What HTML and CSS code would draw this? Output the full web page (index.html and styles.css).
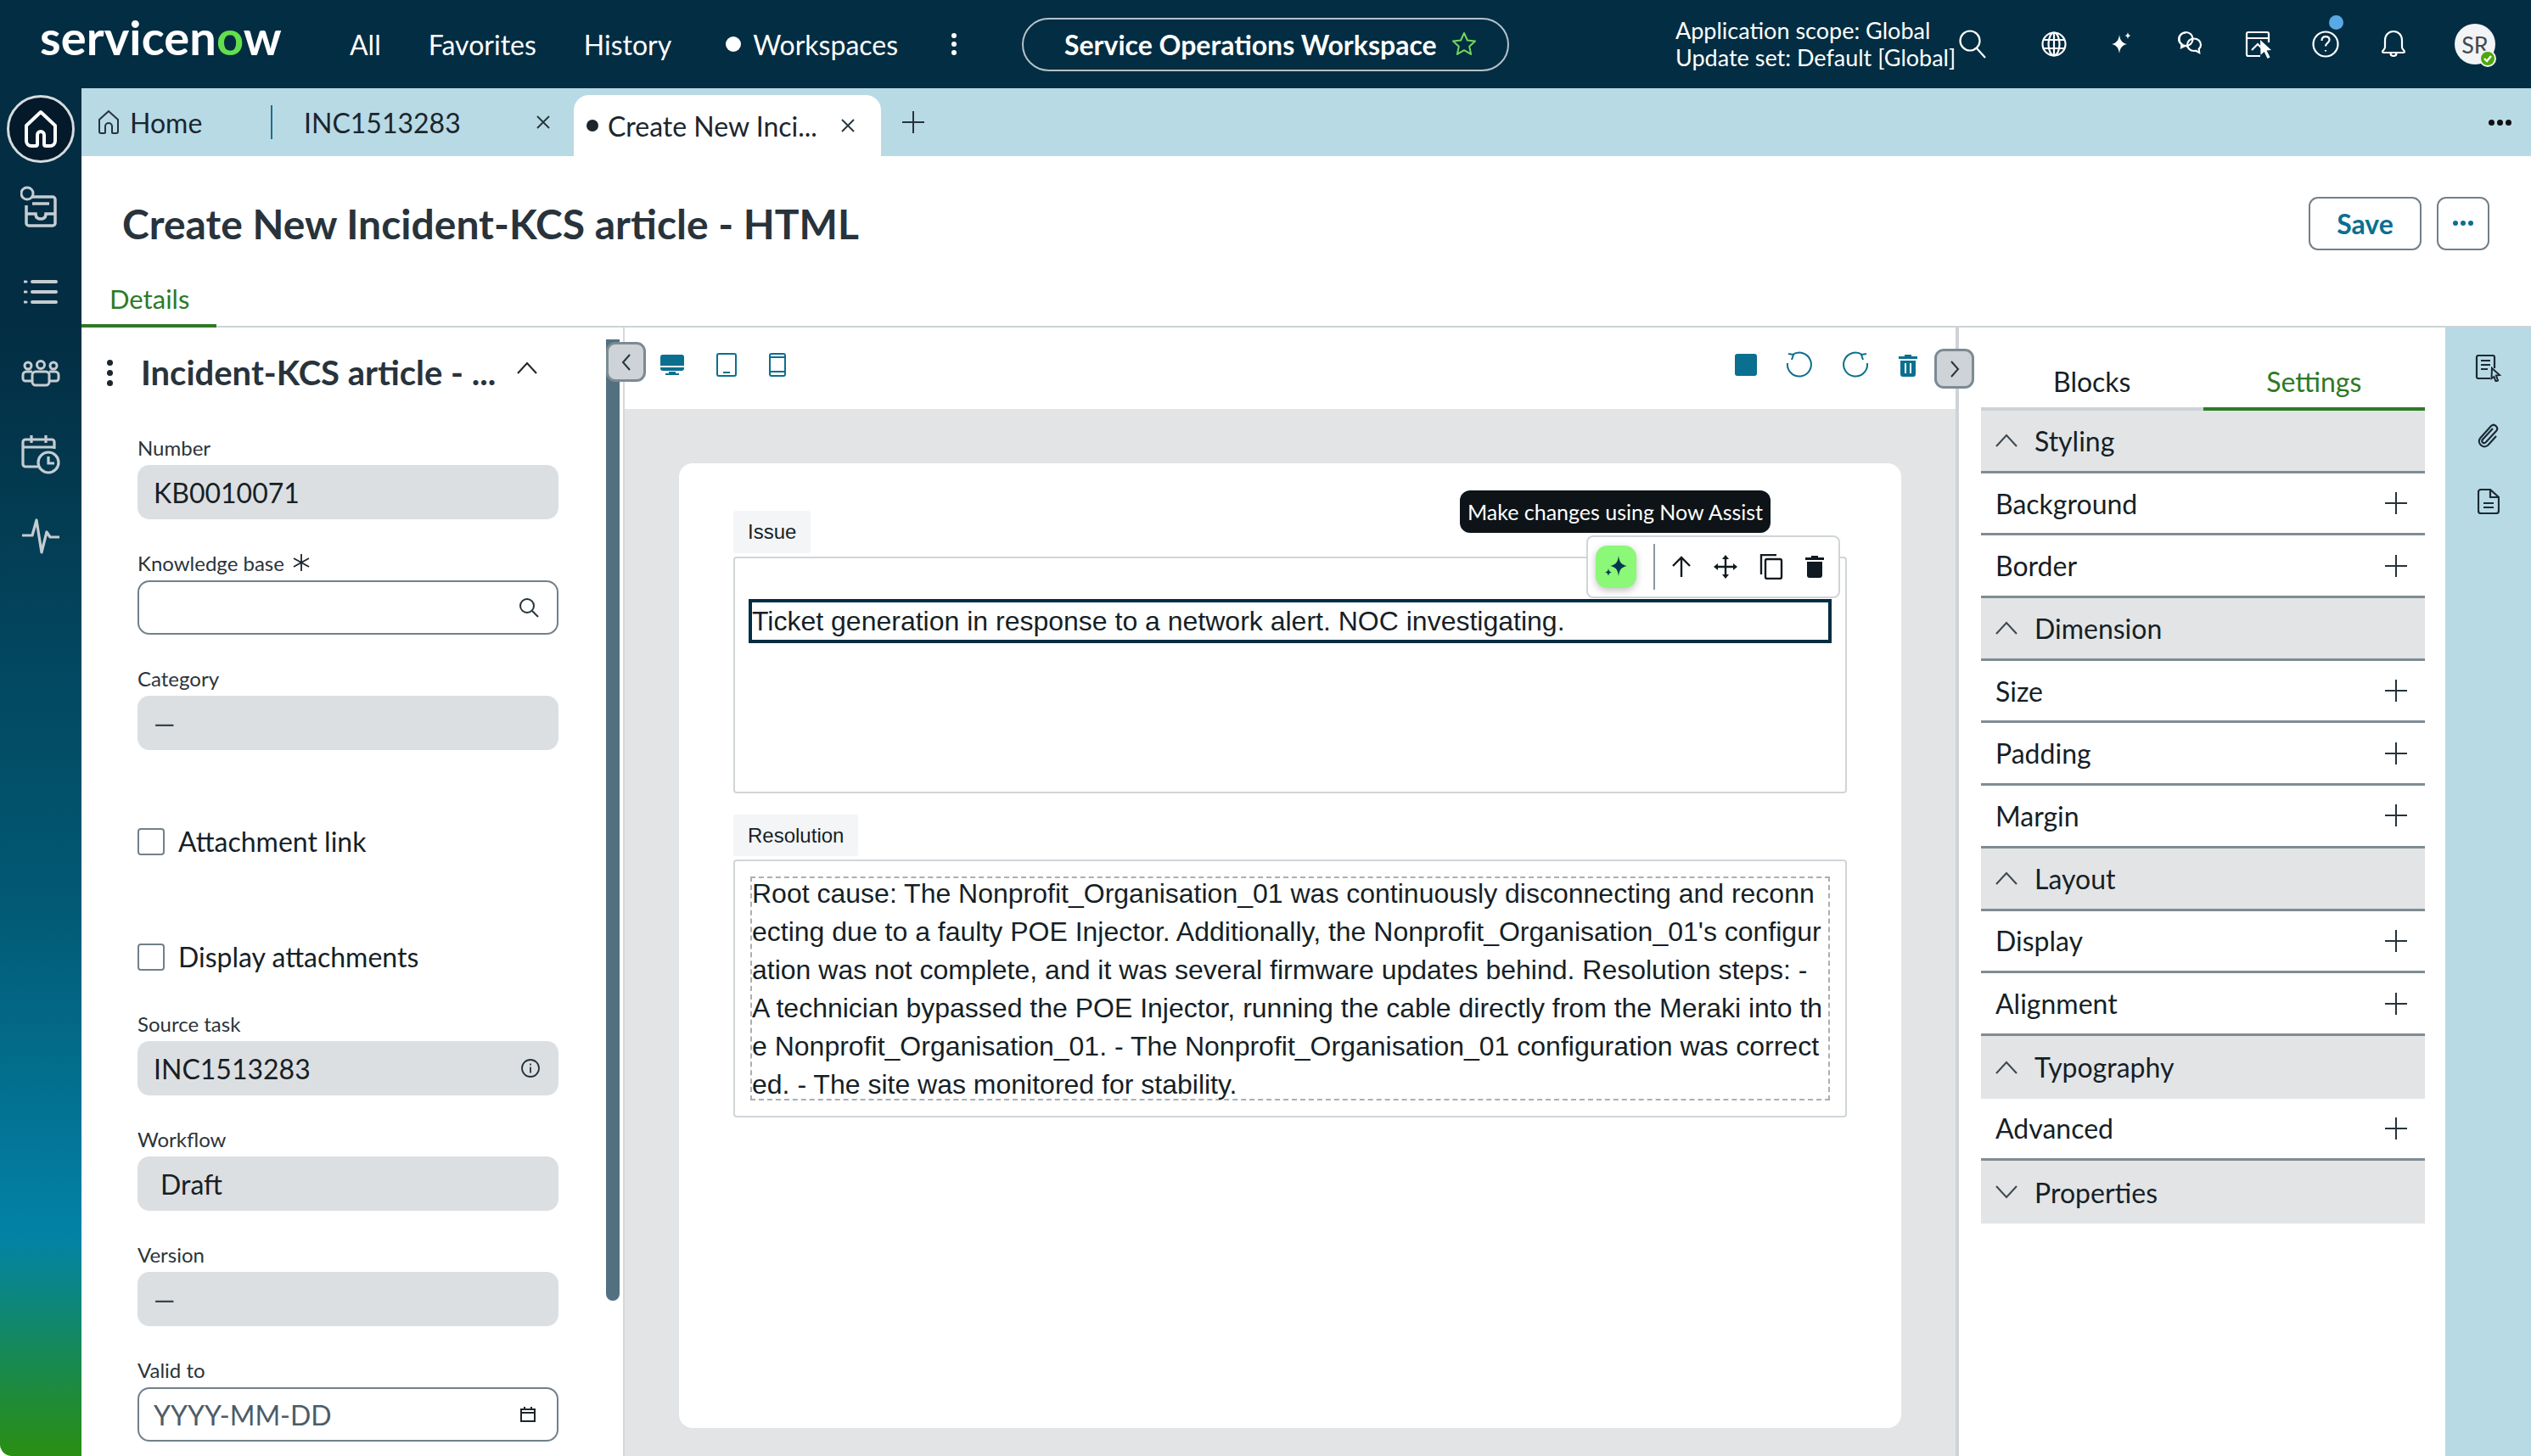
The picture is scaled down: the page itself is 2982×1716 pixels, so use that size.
FILE: index.html
```html
<!DOCTYPE html>
<html lang="en">
<head>
<meta charset="utf-8">
<title>Create New Incident-KCS article - HTML</title>
<link rel="stylesheet" href="styles.css">
</head>
<body>
<div class="app">
<header class="topbar">
  <div class="logo">servicen<span class="logo-o">o</span>w</div>
  <nav class="nav">
    <span>All</span><span>Favorites</span><span>History</span>
    <span class="ws"><i class="dot"></i>Workspaces</span>
    <span class="kebab"><i></i><i></i><i></i></span>
  </nav>
  <div class="pill">
    <span>Service Operations Workspace</span>
    <svg width="32" height="32" viewBox="0 0 32 32"><path d="M16 3l3.9 8.5 9.1 1-6.800 6.200 1.900 9.200L16 23.200 7.900 27.900l1.900-9.200L3 12.500l9.100-1z" fill="none" stroke="#74d95c" stroke-width="2" stroke-linejoin="round"/></svg>
  </div>
  <div class="scope"><div>Application scope: Global</div><div>Update set: Default [Global]</div></div>
  <div class="hicons">
    <svg class="hi" width="40" height="40" viewBox="0 0 40 40"><circle cx="17" cy="16" r="11.500"/><path d="M25 25l10 11"/></svg>
    <svg class="hi h-globe" width="40" height="40" viewBox="0 0 40 40"><circle cx="20" cy="20" r="13.500"/><ellipse cx="20" cy="20" rx="6.500" ry="13.500"/><path d="M20 6.500v27M7 15h26M7 25h26"/></svg>
    <svg class="hi" width="40" height="40" viewBox="0 0 40 40"><path class="fw" d="M17 9c1 7 3.500 9.500 9 11-5.500 1.500-8 4-9 11-1-7-3.500-9.500-9-11 5.500-1.500 8-4 9-11z"/><path class="fw" d="M27 6c.4 2.500 1.300 3.400 3.500 4-2.200.6-3.100 1.500-3.500 4-.4-2.500-1.300-3.400-3.500-4 2.200-.6 3.100-1.500 3.500-4z"/></svg>
    <svg class="hi" width="40" height="40" viewBox="0 0 40 40"><path d="M15.500 6.500c-5 0-8.500 3.400-8.500 7.500 0 2.600 1.300 4.800 3.400 6.200L10 24l4.200-2.100c1 .2 2 .2 3 0"/><circle cx="15.500" cy="14" r="8"/><path d="M25 13.500c-4.500 0-8 3.200-8 7.200s3.500 7.300 8 7.300c.8 0 1.400 0 2-.2l4.200 2.200-.5-4.300c1.500-1.300 2.300-3 2.300-5 0-4-3.500-7.200-8-7.200z"/></svg>
    <svg class="hi" width="40" height="40" viewBox="0 0 40 40"><path d="M33 18V8a2 2 0 0 0-2-2H9a2 2 0 0 0-2 2v24a2 2 0 0 0 2 2h14M7 13h26M13 27l7-7 4 4"/><path class="fw" d="M23 15l13 12-5.500 .5 4 8-3 1.500-3.800-8-4.200 3.700z"/></svg>
    <span class="help">
      <svg class="hi" width="40" height="40" viewBox="0 0 40 40"><circle cx="20" cy="20" r="14.500"/><path d="M15.500 16c0-3 2-4.800 4.700-4.800 2.500 0 4.300 1.600 4.300 3.900 0 3.600-4.500 3.600-4.500 7.400"/><path d="M20 27v1.500"/></svg>
      <i class="notif"></i>
    </span>
    <svg class="hi" width="40" height="40" viewBox="0 0 40 40"><path d="M20 5c-6 0-10 4.500-10 10.500v8c0 2.500-3 4-3 5.500 0 .8.600 1 1.500 1h23c.9 0 1.500-.2 1.500-1 0-1.500-3-3-3-5.500v-8C30 9.500 26 5 20 5zM16.500 30.500c0 2.200 1.500 3.500 3.500 3.500s3.500-1.300 3.500-3.500"/></svg>
    <span class="avatar">SR<i class="status"><svg width="14" height="14" viewBox="0 0 14 14"><path d="M3 7l3 3 5-6" fill="none" stroke="#fff" stroke-width="2.400"/></svg></i></span>
  </div>
</header>

<div class="shell">
  <aside class="rail">
    <div class="rail-home">
      <svg width="44" height="48" viewBox="0 0 44 48"><path d="M22 4L5 20v18a6 6 0 0 0 6 6h5a2 2 0 0 0 2-2V31a4 4 0 0 1 8 0v11a2 2 0 0 0 2 2h5a6 6 0 0 0 6-6V20z" fill="none" stroke="#fff" stroke-width="4" stroke-linejoin="round"/></svg>
    </div>
    <div class="rail-item rail-inbox">
      <svg width="48" height="52" viewBox="0 0 48 52"><path d="M14 14h24a3 3 0 0 1 3 3v28a3 3 0 0 1-3 3H10a3 3 0 0 1-3-3V24" fill="none" stroke="#c5cdd2" stroke-width="3.500"/><path d="M7 34h11c0 4 2 6 6 6s6-2 6-6h11M14 22h20" fill="none" stroke="#c5cdd2" stroke-width="3.500"/><circle cx="8" cy="10" r="7" fill="#032d42" stroke="#c5cdd2" stroke-width="3"/></svg>
    </div>
    <div class="rail-item rail-list">
      <svg width="40" height="30" viewBox="0 0 40 30"><path d="M10 3h28M10 15h28M10 27h28" stroke="#c5cdd2" stroke-width="4" stroke-linecap="round"/><path d="M1 3h2M1 15h2M1 27h2" stroke="#c5cdd2" stroke-width="3" stroke-linecap="round"/></svg>
    </div>
    <div class="rail-item">
      <svg width="46" height="32" viewBox="0 0 46 32"><g fill="none" stroke="#c5cdd2" stroke-width="3"><circle cx="8" cy="7" r="4"/><circle cx="38" cy="7" r="4"/><circle cx="23" cy="6" r="4.500"/><path d="M13 14H6a4 4 0 0 0-4 4v4a3 3 0 0 0 3 3h7M33 14h7a4 4 0 0 1 4 4v4a3 3 0 0 1-3 3h-7"/><path d="M17 14h12a4 4 0 0 1 4 4v8a4 4 0 0 1-4 4H17a4 4 0 0 1-4-4v-8a4 4 0 0 1 4-4z"/></g></svg>
    </div>
    <div class="rail-item">
      <svg width="46" height="48" viewBox="0 0 46 48"><g fill="none" stroke="#c5cdd2" stroke-width="3.200"><path d="M20 38H5a3 3 0 0 1-3-3V9a3 3 0 0 1 3-3h31a3 3 0 0 1 3 3v8M2 15h37M12 1v9M29 1v9"/><circle cx="32" cy="33" r="12"/><path d="M32 26v8h7"/></g></svg>
    </div>
    <div class="rail-item">
      <svg width="46" height="42" viewBox="0 0 46 42"><path d="M1 20h12l5-18 6 38 6-24 4 6h11" fill="none" stroke="#c5cdd2" stroke-width="3.200" stroke-linejoin="round"/></svg>
    </div>
  </aside>

  <main class="main">
    <div class="tabs">
      <div class="tab-home">
        <svg width="26" height="30" viewBox="0 0 26 30"><path d="M13 2L2 12v14a2 2 0 0 0 2 2h4a1 1 0 0 0 1-1v-7a4 4 0 0 1 8 0v7a1 1 0 0 0 1 1h4a2 2 0 0 0 2-2V12z" fill="none" stroke="#26333b" stroke-width="2"/></svg>
        <span>Home</span>
      </div>
      <i class="tab-sep"></i>
      <div class="tab-inc"><span>INC1513283</span><svg class="x" width="18" height="18" viewBox="0 0 18 18"><path d="M2 2l14 14M16 2L2 16" stroke="#26333b" stroke-width="1.800"/></svg></div>
      <div class="tab-active"><i class="tdot"></i><span>Create New Inci...</span><svg class="x" width="18" height="18" viewBox="0 0 18 18"><path d="M2 2l14 14M16 2L2 16" stroke="#26333b" stroke-width="1.800"/></svg></div>
      <svg class="tab-plus" width="26" height="26" viewBox="0 0 26 26"><path d="M13 0v26M0 13h26" stroke="#26333b" stroke-width="2"/></svg>
      <div class="tab-more"><i></i><i></i><i></i></div>
    </div>

    <div class="pagehead">
      <div class="titlerow">
        <h1>Create New Incident-KCS article - HTML</h1>
        <div class="actions">
          <button class="btn-save">Save</button>
          <button class="btn-more"><i></i><i></i><i></i></button>
        </div>
      </div>
      <div class="detailrow"><span class="detailtab">Details</span></div>
    </div>

    <div class="work">
      <section class="left">
        <div class="form">
          <div class="panelhead">
            <span class="pkebab"><i></i><i></i><i></i></span>
            <h2>Incident-KCS article - ...</h2>
            <svg class="pchev" width="26" height="16" viewBox="0 0 26 16"><path d="M2 14L13 2l11 12" fill="none" stroke="#1c262d" stroke-width="2"/></svg>
          </div>
          <div class="field"><label>Number</label><div class="in ro">KB0010071</div></div>
          <div class="field"><label>Knowledge base <svg class="req" width="20" height="20" viewBox="0 0 20 20"><path d="M10 0v20M1 5l18 10M19 5L1 15" stroke="#1c262d" stroke-width="1.800"/></svg></label>
            <div class="in edit"><span></span><svg width="24" height="24" viewBox="0 0 24 24"><circle cx="10" cy="10" r="8" fill="none" stroke="#26333b" stroke-width="2"/><path d="M16 16l7 7" stroke="#26333b" stroke-width="2"/></svg></div></div>
          <div class="field"><label>Category</label><div class="in ro dash">—</div></div>
          <div class="check"><i class="box"></i><span>Attachment link</span></div>
          <div class="check c2"><i class="box"></i><span>Display attachments</span></div>
          <div class="field"><label>Source task</label><div class="in ro"><span>INC1513283</span><svg width="24" height="24" viewBox="0 0 24 24"><circle cx="12" cy="12" r="10" fill="none" stroke="#26333b" stroke-width="1.800"/><path d="M12 10.500v7M12 6.500v2" stroke="#26333b" stroke-width="1.800"/></svg></div></div>
          <div class="field"><label>Workflow</label><div class="in ro draft">Draft</div></div>
          <div class="field"><label>Version</label><div class="in ro dash">—</div></div>
          <div class="field"><label>Valid to</label><div class="in edit ph"><span>YYYY-MM-DD</span><svg class="cal" width="20" height="20" viewBox="0 0 20 20"><path d="M2 4h16v14H2zM2 8h16M6 1v4M14 1v4" fill="none" stroke="#1c262d" stroke-width="2"/></svg></div></div>
        </div>
        <div class="scroll"></div>
        <button class="sidebtn lbtn"><svg width="12" height="22" viewBox="0 0 12 22"><path d="M10 2L2 11l8 9" fill="none" stroke="#26333b" stroke-width="2"/></svg></button>
      </section>

      <section class="center">
        <div class="ctool">
          <div class="devices">
            <svg width="28" height="24" viewBox="0 0 28 24"><path d="M3 0h22a3 3 0 0 1 3 3v10H0V3a3 3 0 0 1 3-3zM0 15h28v1a3 3 0 0 1-3 3H3a3 3 0 0 1-3-3zM10 20h8v2h4v2H6v-2h4z" fill="#0b6f8f"/></svg>
            <svg width="24" height="28" viewBox="0 0 24 28"><rect x="1" y="1" width="22" height="26" rx="2" fill="none" stroke="#0b6f8f" stroke-width="2"/><path d="M8 23h8" stroke="#0b6f8f" stroke-width="2"/></svg>
            <svg width="20" height="28" viewBox="0 0 20 28"><rect x="1" y="1" width="18" height="26" rx="2" fill="none" stroke="#0b6f8f" stroke-width="2"/><path d="M1 5h18M1 22h18" stroke="#0b6f8f" stroke-width="2"/></svg>
          </div>
          <div class="history">
            <i class="sq"></i>
            <svg width="32" height="32" viewBox="0 0 32 32"><path d="M8 4a14 14 0 1 1-6 10" fill="none" stroke="#0b6f8f" stroke-width="2"/><path d="M3 3l6 1-2 6" fill="none" stroke="#0b6f8f" stroke-width="2"/></svg>
            <svg width="32" height="32" viewBox="0 0 32 32"><path d="M24 4a14 14 0 1 0 6 10" fill="none" stroke="#0b6f8f" stroke-width="2"/><path d="M29 3l-6 1 2 6" fill="none" stroke="#0b6f8f" stroke-width="2"/></svg>
            <svg width="24" height="28" viewBox="0 0 24 28"><path d="M8 2h8v2h7v3H1V4h7zM3 9h18v16a3 3 0 0 1-3 3H6a3 3 0 0 1-3-3z" fill="#0b6f8f"/><path d="M9 12v12M15 12v12" stroke="#fff" stroke-width="2"/></svg>
          </div>
        </div>
        <div class="canvas">
          <div class="card">
            <div class="blabel">Issue</div>
            <div class="bbox issue"><div class="ticket">Ticket generation in response to a network alert. NOC investigating.</div></div>
            <div class="blabel res">Resolution</div>
            <div class="bbox resol"><div class="dashed"><p>Root cause: The Nonprofit_Organisation_01 was continuously disconnecting and reconnecting due to a faulty POE Injector. Additionally, the Nonprofit_Organisation_01's configuration was not complete, and it was several firmware updates behind. Resolution steps: - A technician bypassed the POE Injector, running the cable directly from the Meraki into the Nonprofit_Organisation_01. - The Nonprofit_Organisation_01 configuration was corrected. - The site was monitored for stability.</p></div></div>

            <div class="tooltip">Make changes using Now Assist</div>
            <div class="floatbar">
              <span class="assist"><svg width="30" height="32" viewBox="0 0 30 32"><path d="M18 3c1 8 3.500 10.500 10 12-6.500 1.500-9 4-10 12-1-8-3.500-10.500-10-12 6.500-1.500 9-4 10-12z" fill="#05384f"/><path d="M6 18c.5 3 1.300 3.800 4 4.500-2.700.7-3.500 1.500-4 4.500-.5-3-1.300-3.800-4-4.500 2.700-.7 3.500-1.500 4-4.500z" fill="#05384f"/></svg></span>
              <i class="fsep"></i>
              <svg class="f1" width="24" height="26" viewBox="0 0 24 26"><path d="M12 25V3M2 12L12 2l10 10" fill="none" stroke="#101a20" stroke-width="2.400"/></svg>
              <svg width="28" height="28" viewBox="0 0 28 28"><path d="M14 3v22M3 14h22" stroke="#101a20" stroke-width="2.400"/><path d="M14 0l4 5h-8zM14 28l-4-5h8zM0 14l5-4v8zM28 14l-5 4v-8z" fill="#101a20"/></svg>
              <svg width="28" height="30" viewBox="0 0 28 30"><path d="M2 24V1h18" fill="none" stroke="#101a20" stroke-width="2.400"/><rect x="7" y="6" width="19" height="23" rx="2" fill="none" stroke="#101a20" stroke-width="2.400"/></svg>
              <svg width="22" height="26" viewBox="0 0 22 26"><path d="M7 0h8v2h7v3H0V2h7zM2 7h18v16a3 3 0 0 1-3 3H5a3 3 0 0 1-3-3z" fill="#101a20"/></svg>
            </div>
          </div>
        </div>
        <button class="sidebtn rbtn"><svg width="12" height="22" viewBox="0 0 12 22"><path d="M2 2l8 9-8 9" fill="none" stroke="#26333b" stroke-width="2"/></svg></button>
      </section>

      <section class="right">
        <div class="rtabs"><span class="rtab">Blocks</span><span class="rtab on">Settings</span></div>
        <div class="row head"><svg class="chev" width="26" height="16" viewBox="0 0 26 16"><path d="M1 15L13 2l12 13"/></svg><span>Styling</span></div>
        <div class="row"><span>Background</span><svg class="plus" width="26" height="26" viewBox="0 0 26 26"><path d="M13 0v26M0 13h26"/></svg></div>
        <div class="row"><span>Border</span><svg class="plus" width="26" height="26" viewBox="0 0 26 26"><path d="M13 0v26M0 13h26"/></svg></div>
        <div class="row head"><svg class="chev" width="26" height="16" viewBox="0 0 26 16"><path d="M1 15L13 2l12 13"/></svg><span>Dimension</span></div>
        <div class="row"><span>Size</span><svg class="plus" width="26" height="26" viewBox="0 0 26 26"><path d="M13 0v26M0 13h26"/></svg></div>
        <div class="row"><span>Padding</span><svg class="plus" width="26" height="26" viewBox="0 0 26 26"><path d="M13 0v26M0 13h26"/></svg></div>
        <div class="row"><span>Margin</span><svg class="plus" width="26" height="26" viewBox="0 0 26 26"><path d="M13 0v26M0 13h26"/></svg></div>
        <div class="row head"><svg class="chev" width="26" height="16" viewBox="0 0 26 16"><path d="M1 15L13 2l12 13"/></svg><span>Layout</span></div>
        <div class="row"><span>Display</span><svg class="plus" width="26" height="26" viewBox="0 0 26 26"><path d="M13 0v26M0 13h26"/></svg></div>
        <div class="row"><span>Alignment</span><svg class="plus" width="26" height="26" viewBox="0 0 26 26"><path d="M13 0v26M0 13h26"/></svg></div>
        <div class="row head flat"><svg class="chev" width="26" height="16" viewBox="0 0 26 16"><path d="M1 15L13 2l12 13"/></svg><span>Typography</span></div>
        <div class="row"><span>Advanced</span><svg class="plus" width="26" height="26" viewBox="0 0 26 26"><path d="M13 0v26M0 13h26"/></svg></div>
        <div class="row head flat"><svg class="chev" width="26" height="16" viewBox="0 0 26 16"><path d="M1 1l12 13L25 1"/></svg><span>Properties</span></div>
      </section>

      <aside class="rrail">
        <svg width="32" height="32" viewBox="0 0 32 32"><path d="M18 28H4a2 2 0 0 1-2-2V3a2 2 0 0 1 2-2h17a2 2 0 0 1 2 2v13M7 7h11M7 12h11M7 17h8" fill="none" stroke="#1b2a33" stroke-width="2.200"/><path d="M20 16l9 8-4 .5 2 6-2.500 1-2-5.500-3 2z" fill="#b8dae5" stroke="#1b2a33" stroke-width="2"/></svg>
        <svg width="28" height="30" viewBox="0 0 28 30"><path d="M19 7L7 20c-2 2.500 1 5.500 3.500 3.500L23 10c3.500-4-2-9.500-6-6L4.500 18c-5 6 3 14 9 8.500L23 16" fill="none" stroke="#1b2a33" stroke-width="2.200"/></svg>
        <svg width="26" height="30" viewBox="0 0 26 30"><path d="M15 1H4a3 3 0 0 0-3 3v22a3 3 0 0 0 3 3h18a3 3 0 0 0 3-3V10zM15 1v9h10M7 17h12M7 22h12" fill="none" stroke="#1b2a33" stroke-width="2.200"/></svg>
      </aside>
    </div>
  </main>
</div>
</div>
</body>
</html>
```

FILE: styles.css
```css
* { box-sizing: border-box; }
html, body { margin: 0; padding: 0; background: #fff; }
body { font-family: "Lato", "Liberation Sans", sans-serif; color: #161f26; }
i { display: block; font-style: normal; }
button { font-family: inherit; background: #fff; padding: 0; cursor: pointer; }
.app { width: 2982px; height: 1716px; overflow: hidden; display: flex; flex-direction: column; }

/* top bar */
.topbar { height: 104px; flex: none; background: #032d42; color: #fff; display: flex; align-items: center; }
.logo { margin-left: 47px; width: 298px; font-size: 56px; font-weight: 700; line-height: 60px; letter-spacing: .1px; position: relative; top: -8px; white-space: nowrap; }
.logo-o { color: #63df4e; }
.nav { margin-left: 67px; display: flex; align-items: center; gap: 56px; font-size: 32px; width: 792px; }
.ws { display: flex; align-items: center; gap: 14px; margin-left: 8px; }
.dot { width: 18px; height: 18px; border-radius: 50%; background: #fff; }
.kebab { display: flex; flex-direction: column; gap: 4px; margin-left: 7px; }
.kebab i { width: 6px; height: 6px; border-radius: 50%; background: #fff; }
.pill { width: 574px; height: 63px; border: 2px solid #b4c2ca; border-radius: 32px; display: flex; align-items: center; gap: 16px; padding-left: 48px; font-size: 32px; font-weight: 700; white-space: nowrap; flex: none; }
.scope { margin-left: 196px; width: 330px; flex: none; font-size: 27px; line-height: 32px; white-space: nowrap; }
.hicons { margin-left: 0; display: flex; align-items: center; gap: 40px; flex: none; }
.hi { fill: none; stroke: #fff; stroke-width: 2.200; display: block; }
.hi .fw { fill: #fff; stroke: none; }
.hi.h-globe { margin-left: 16px; }
.help { position: relative; display: block; width: 40px; height: 40px; }
.notif { position: absolute; left: 24px; top: -14px; width: 17px; height: 17px; border-radius: 50%; background: #5aa9e6; }
.avatar { position: relative; margin-left: 12px; width: 48px; height: 48px; border-radius: 50%; background: #f2f4f5; color: #3f4a52; font-size: 27px; display: flex; align-items: center; justify-content: center; }
.status { position: absolute; right: -1px; bottom: -3px; width: 20px; height: 20px; border-radius: 50%; background: #4ea60d; border: 2px solid #f2f4f5; display: flex; align-items: center; justify-content: center; }

/* shell */
.shell { flex: 1; display: flex; min-height: 0; }
.rail { width: 96px; flex: none; border-bottom-left-radius: 14px; padding-top: 8px; display: flex; flex-direction: column; align-items: center; background: linear-gradient(180deg, #032d42 0%, #032d42 17%, #025a75 60%, #0382a6 84%, #0b8681 88%, #2a8e12 100%); }
.rail-home { width: 80px; height: 80px; border-radius: 50%; background: #04192a; border: 3px solid #d5dbde; display: flex; align-items: center; justify-content: center; }
.rail-item { height: 96px; display: flex; align-items: center; justify-content: center; flex: none; }
.rail-inbox { margin-top: 4px; }
.rail-list { margin-top: 4px; }
.main { flex: 1; min-width: 0; display: flex; flex-direction: column; }

/* tabs */
.tabs { height: 80px; flex: none; background: #b8dae5; display: flex; align-items: center; font-size: 32px; color: #1b262d; position: relative; }
.tab-home { width: 223px; padding-left: 19px; display: flex; align-items: center; gap: 12px; }
.tab-sep { width: 2px; height: 40px; background: #1c6f8b; }
.tab-inc { width: 355px; padding-left: 37px; padding-right: 27px; display: flex; align-items: center; justify-content: space-between; }
.tab-active { width: 362px; height: 72px; align-self: flex-end; background: #fff; border-radius: 18px 18px 0 0; display: flex; align-items: center; padding-left: 15px; white-space: nowrap; }
.tdot { width: 14px; height: 14px; border-radius: 50%; background: #1b262d; margin-right: 11px; }
.tab-active .x { margin-left: 27px; }
.tab-plus { margin-left: 25px; }
.tab-more { margin-left: auto; margin-right: 23px; display: flex; gap: 3px; }
.tab-more i { width: 7px; height: 7px; border-radius: 50%; background: #111; }

/* page head */
.pagehead { height: 202px; flex: none; }
.titlerow { height: 158px; display: flex; align-items: center; justify-content: space-between; padding: 0 49px 0 48px; }
h1 { margin: 0; font-size: 48px; font-weight: 700; color: #28333b; white-space: nowrap; }
.actions { display: flex; gap: 18px; }
.btn-save { width: 133px; height: 63px; border: 2px solid #72808a; border-radius: 11px; font-size: 32px; font-weight: 700; color: #0b6f8f; }
.btn-more { width: 62px; height: 63px; border: 2px solid #72808a; border-radius: 11px; display: flex; align-items: center; justify-content: center; gap: 3px; }
.btn-more i { width: 6px; height: 6px; border-radius: 50%; background: #0b6f8f; }
.detailrow { height: 44px; border-bottom: 2px solid #cdd3d7; }
.detailtab { display: inline-block; height: 44px; padding: 0 32px 0 33px; font-size: 31px; line-height: 20px; color: #2d7a25; border-bottom: 4px solid #2d7a25; }

/* work area */
.work { flex: 1; min-height: 0; display: flex; }
.left { width: 640px; flex: none; display: flex; position: relative; border-right: 2px solid #d5d9dc; }
.form { width: 618px; flex: none; padding-left: 66px; }
.panelhead { height: 106px; margin-bottom: 20px; display: flex; align-items: center; margin-left: -36px; }
.pkebab { display: flex; flex-direction: column; gap: 5px; }
.pkebab i { width: 7px; height: 7px; border-radius: 50%; background: #1c262d; }
h2 { margin: 0 0 0 33px; width: 442px; font-size: 40px; font-weight: 700; color: #28333b; white-space: nowrap; }
.pchev { margin-top: -10px; }
.field { width: 496px; padding-bottom: 36px; }
.field label { display: flex; align-items: center; gap: 10px; height: 30px; margin-bottom: 6px; font-size: 24px; color: #2a343b; }
.req { display: block; }
.in { height: 64px; border-radius: 14px; display: flex; align-items: center; justify-content: space-between; padding: 0 21px 0 19px; font-size: 32px; color: #181f25; }
.ro { background: #dcdfe2; }
.dash { color: #39434a; }
.draft { padding-left: 27px; }
.edit { background: #fff; border: 2px solid #72808a; padding-left: 17px; }
.ph { color: #4d5c66; }
.cal { margin-right: 3px; }
.check { height: 136px; padding-top: 40px; display: flex; align-items: flex-start; gap: 16px; font-size: 32px; width: 496px; }
.check span { line-height: 64px; }
.check.c2 { height: 135px; }
.box { width: 32px; height: 32px; margin-top: 16px; border: 2px solid #72808a; border-radius: 4px; background: #fff; flex: none; }
.scroll { width: 16px; height: 1133px; margin-top: 14px; background: #537080; border-radius: 0 0 8px 8px; flex: none; }
.sidebtn { position: absolute; z-index: 3; width: 47px; height: 47px; border: 3px solid #7c8a93; border-radius: 11px; background: #cdd3d7; display: flex; align-items: center; justify-content: center; }
.lbtn { left: 618px; top: 17px; }
.rbtn { right: -22px; top: 25px; }

.center { width: 1572px; flex: none; position: relative; border-right: 4px solid #cdd3d7; display: flex; flex-direction: column; }
.ctool { height: 96px; flex: none; display: flex; align-items: center; justify-content: space-between; padding: 0 44px 0 42px; position: relative; top: -4px; margin-bottom: 0; }
.devices { display: flex; align-items: center; gap: 38px; }
.devices svg, .history svg { display: block; }
.history { display: flex; align-items: center; gap: 34px; }
.sq { width: 26px; height: 26px; border-radius: 3px; background: #0b6f8f; }
.canvas { flex: 1; background: #e2e4e6; padding: 64px 64px 33px; min-height: 0; }
.card { height: 100%; background: #fff; border-radius: 16px; padding: 56px 64px 0; position: relative; }
.blabel { display: flex; align-items: center; width: max-content; height: 50px; padding: 0 17px; background: #f4f5f6; border-radius: 3px; font: 24px "Liberation Sans", Arial, sans-serif; color: #161f26; margin-bottom: 4px; }
.blabel.res { height: 49px; margin-top: 25px; }
.bbox { border: 2px solid #d0d5d8; border-radius: 4px; font: 32px "Liberation Sans", Arial, sans-serif; color: #161f26; }
.issue { height: 279px; padding: 48px 16px 0; }
.ticket { height: 52px; border: 4px solid #032d42; line-height: 44px; white-space: nowrap; overflow: hidden; }
.resol { height: 304px; padding: 18px 18px 0; }
.dashed { height: 264px; border: 2px dashed #a9b0b5; }
.dashed p { margin: -4px 0 0; line-height: 45px; word-break: break-all; }
.tooltip { position: absolute; left: 920px; top: 32px; width: 366px; height: 50px; border-radius: 12px; background: #0d1317; color: #fff; display: flex; align-items: center; justify-content: center; font-size: 25px; white-space: nowrap; }
.floatbar { position: absolute; left: 1069px; top: 85px; width: 299px; height: 74px; background: #fff; border: 2px solid #d0d5d8; border-radius: 8px; display: flex; align-items: center; padding-left: 9px; gap: 26px; z-index: 2; }
.assist { width: 48px; height: 50px; border-radius: 14px; background: #8bf878; box-shadow: 0 3px 8px rgba(0,0,0,.25); display: flex; align-items: center; justify-content: center; flex: none; }
.fsep { width: 2px; height: 54px; background: #8c979e; margin: 0 -7px 0 -6px; flex: none; }
.floatbar svg { flex: none; display: block; }

/* settings */
.right { width: 571px; flex: none; padding: 0 24px; margin-left: 2px; }
.rtabs { display: flex; height: 98px; }
.rtab { flex: 1; display: flex; align-items: center; justify-content: center; padding-top: 32px; font-size: 32px; color: #161f26; border-bottom: 4px solid #cdd3d7; }
.rtab.on { color: #2d7a25; border-bottom-color: #2d7a25; }
.row { height: 73.700px; display: flex; align-items: center; justify-content: space-between; padding: 0 21px 0 17px; font-size: 32px; color: #161f26; border-bottom: 3px solid #7f8c94; }
.row.head { background: #e2e4e6; justify-content: flex-start; gap: 20px; }
.row.flat { border-bottom: 0; }
.chev { fill: none; stroke: #3c4850; stroke-width: 2; display: block; }
.plus { stroke: #26333b; stroke-width: 2; display: block; }
.rrail { flex: 1; background: #b8dae5; display: flex; flex-direction: column; align-items: center; padding-top: 32px; gap: 48px; }
```
